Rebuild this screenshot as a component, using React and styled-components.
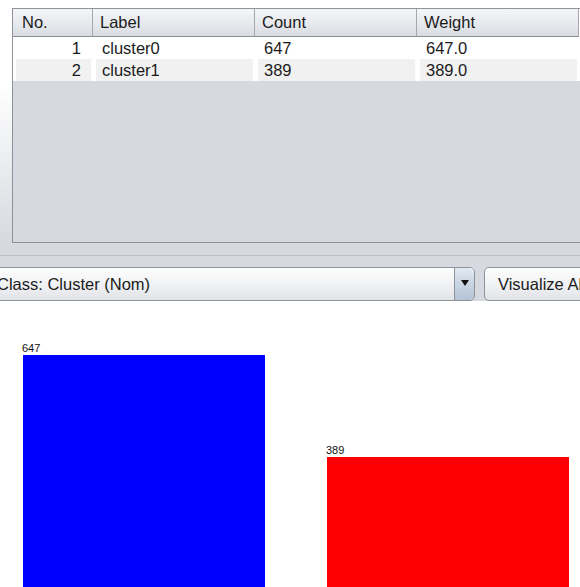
import React from "react";
import styled, { createGlobalStyle } from "styled-components";

const Global = createGlobalStyle`
  html, body { margin: 0; padding: 0; background: #fff; overflow: hidden; }
  body { font-family: "Liberation Sans", Arial, sans-serif; color: #1b1b1b; }
`;

const Page = styled.div`
  width: 580px;
  height: 587px;
  overflow: hidden;
  display: flex;
  flex-direction: column;
`;

const TableArea = styled.div`
  padding: 8px 0 0 12px;
  background: linear-gradient(#ffffff 0%, #ffffff 35%, #d6d9df 100%);
`;

const ScrollPane = styled.div`
  box-sizing: border-box;
  width: 620px;
  height: 235px;
  border: 1px solid #8f9296;
  border-right: none;
  background: #d6d9df;
  display: flex;
  flex-direction: column;
`;

const cols = "80px 162px 162px 162px 1fr";

const HeaderRow = styled.div`
  display: grid;
  grid-template-columns: ${cols};
  height: 28px;
  background: #fff;
`;

const HeaderCell = styled.div`
  display: flex;
  align-items: center;
  padding-left: ${(p) => (p.$first ? 9 : 7)}px;
  font-size: 16.5px;
  background: linear-gradient(#f4f5f7 0%, #e6e9ed 55%, #d8dce2 100%);
  border-right: 1px solid #a4a8ad;
  border-bottom: 1px solid #8c9095;
`;

const HeaderFill = styled.div`
  background: #fff;
`;

const Body = styled.div`
  background: #fff;
`;

const Row = styled.div`
  display: grid;
  grid-template-columns: ${cols};
  height: 22px;
`;

const Cell = styled.div`
  display: flex;
  align-items: center;
  font-size: 16.5px;
  padding: ${(p) => (p.$right ? "0 10px 0 0" : "0 0 0 6px")};
  justify-content: ${(p) => (p.$right ? "flex-end" : "flex-start")};
  margin: 0 2px 0 3px;
  background: ${(p) => (p.$alt ? "#f1f1f1" : "#fff")};
`;

const LowerPanel = styled.div`
  background: #d6d9df;
  padding-top: 12px;
  display: flex;
  flex-direction: column;
`;

const Divider = styled.div`
  height: 1px;
  background: #bcc0c6;
  margin-bottom: 11px;
`;

const Controls = styled.div`
  display: flex;
  height: 34px;
`;

const Combo = styled.div`
  box-sizing: border-box;
  margin-left: -10px;
  width: 485px;
  height: 34px;
  flex-shrink: 0;
  display: flex;
  border: 1px solid #8e9399;
  border-radius: 5px;
  background: linear-gradient(#fdfdfd 0%, #f1f2f4 50%, #e1e3e7 100%);
  overflow: hidden;
`;

const ComboText = styled.div`
  flex: 1;
  display: flex;
  align-items: center;
  padding-left: 6px;
  font-size: 16.5px;
  white-space: nowrap;
`;

const ArrowButton = styled.div`
  width: 19px;
  display: flex;
  align-items: center;
  justify-content: center;
  border-left: 1px solid #8e9399;
  background: linear-gradient(#e3e9f1 0%, #c9d5e3 50%, #b4c4d6 100%);
`;

const Triangle = styled.div`
  width: 0;
  height: 0;
  margin-top: -2px;
  border-left: 4px solid transparent;
  border-right: 4px solid transparent;
  border-top: 6px solid #111;
`;

const Button = styled.div`
  box-sizing: border-box;
  margin-left: 9px;
  height: 34px;
  flex-shrink: 0;
  width: 140px;
  display: flex;
  align-items: center;
  padding-left: 13px;
  font-size: 16.5px;
  white-space: nowrap;
  border: 1px solid #8e9399;
  border-radius: 5px;
  background: linear-gradient(#fdfdfd 0%, #f1f2f4 50%, #e1e3e7 100%);
`;

const Chart = styled.div`
  flex-shrink: 0;
  height: 310px;
  background: #fff;
  display: flex;
  align-items: flex-end;
  padding-left: 23px;
  gap: 62px;
`;

const BarGroup = styled.div`
  display: flex;
  flex-direction: column;
`;

const BarLabel = styled.div`
  font-size: 11px;
  line-height: 11px;
  margin: 0 0 1px -1px;
  color: #111;
`;

const Bar = styled.div`
  width: 242px;
  background: ${(p) => p.$color};
`;

const rows = [
  { no: 1, label: "cluster0", count: 647, weight: "647.0" },
  { no: 2, label: "cluster1", count: 389, weight: "389.0" },
];

const bars = [
  { value: 647, color: "#0000ff" },
  { value: 389, color: "#ff0000" },
];

const SCALE = 256 / 647;

export default function App() {
  return (
    <Page>
      <Global />
      <TableArea>
        <ScrollPane>
          <HeaderRow>
            <HeaderCell $first>No.</HeaderCell>
            <HeaderCell>Label</HeaderCell>
            <HeaderCell>Count</HeaderCell>
            <HeaderCell>Weight</HeaderCell>
            <HeaderFill />
          </HeaderRow>
          <Body>
            {rows.map((r, i) => (
              <Row key={r.no}>
                <Cell $right $alt={i % 2 === 1}>{r.no}</Cell>
                <Cell $alt={i % 2 === 1}>{r.label}</Cell>
                <Cell $alt={i % 2 === 1}>{r.count}</Cell>
                <Cell $alt={i % 2 === 1}>{r.weight}</Cell>
              </Row>
            ))}
          </Body>
        </ScrollPane>
      </TableArea>
      <LowerPanel>
        <Divider />
        <Controls>
          <Combo>
            <ComboText>Class: Cluster (Nom)</ComboText>
            <ArrowButton>
              <Triangle />
            </ArrowButton>
          </Combo>
          <Button>Visualize All</Button>
        </Controls>
      </LowerPanel>
      <Chart>
        {bars.map((b) => (
          <BarGroup key={b.value}>
            <BarLabel>{b.value}</BarLabel>
            <Bar $color={b.color} style={{ height: Math.round(b.value * SCALE) }} />
          </BarGroup>
        ))}
      </Chart>
    </Page>
  );
}
